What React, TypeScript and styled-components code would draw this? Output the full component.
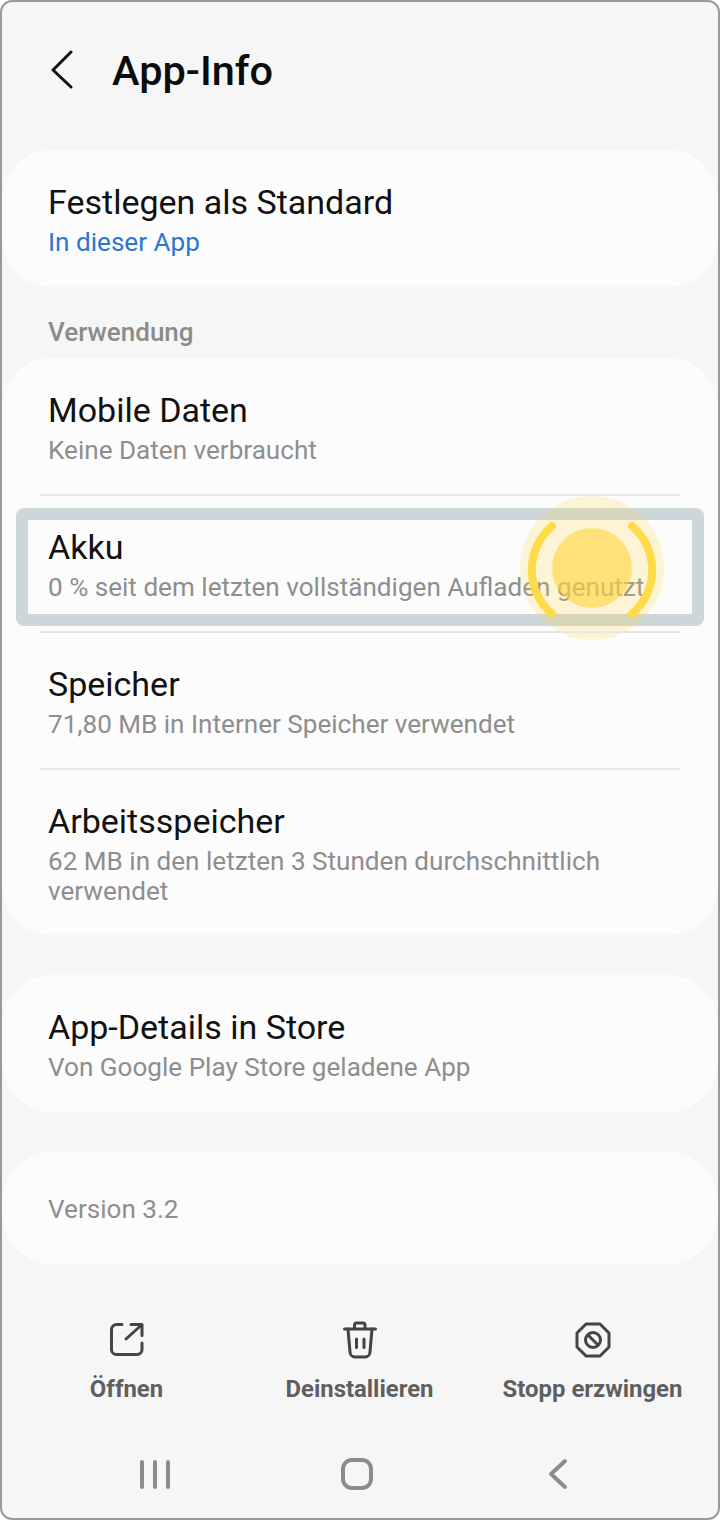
import styled, { createGlobalStyle } from 'styled-components';

const GlobalStyle = createGlobalStyle`
  html, body {
    margin: 0;
    padding: 0;
    background: #fff;
  }
  * {
    box-sizing: border-box;
  }
`;

const Phone = styled.div`
  width: 720px;
  height: 1520px;
  display: flex;
  flex-direction: column;
  overflow: hidden;
  background: #f6f6f6;
  border: 2px solid #9a9a9a;
  border-radius: 12px;
  font-family: Roboto, 'Liberation Sans', sans-serif;
`;

const Header = styled.header`
  height: 148px;
  display: flex;
  align-items: center;
  padding: 0 0 12px 48px;
  gap: 38px;
`;

const HeaderTitle = styled.h1`
  margin: 0;
  font-size: 41.5px;
  font-weight: 500;
  color: #0c0c0c;
`;

const Card = styled.section<{ $gap?: number }>`
  background: #fcfcfc;
  border-radius: 50px;
  margin-bottom: ${(p) => p.$gap ?? 40}px;
`;

const SectionLabel = styled.div`
  height: 71px;
  padding: 30px 0 0 46px;
  font-size: 26px;
  line-height: 30px;
  font-weight: 500;
  color: #8b8b8b;
`;

const Row = styled.div<{ $wrapped?: boolean }>`
  position: relative;
  padding: 32px 40px ${(p) => (p.$wrapped ? 29 : 30)}px 46px;
`;

const Divider = styled.div`
  position: relative;
  height: 2px;
  margin: -1px 38px;
  background: #e4e6e8;
`;

const RowTitle = styled.div`
  font-size: 34px;
  line-height: 40px;
  color: #111;
`;

const RowSub = styled.div<{ $accent?: boolean }>`
  margin-top: 5px;
  font-size: 26.1px;
  line-height: 30px;
  color: ${(p) => (p.$accent ? '#2a76d2' : '#8e8e8e')};
`;

const VersionText = styled.div`
  padding: 42px 46px 40px;
  font-size: 26.1px;
  line-height: 30px;
  color: #8e8e8e;
`;

const Highlight = styled.div`
  position: absolute;
  left: 14px;
  right: 14px;
  top: 13px;
  height: 118px;
  border: 12px solid #cdd6db;
  border-radius: 8px;
`;

const TouchPoint = styled.svg`
  position: absolute;
  left: 518px;
  top: 1px;
  width: 144px;
  height: 144px;
  overflow: visible;
`;

const Actions = styled.div`
  display: grid;
  grid-template-columns: repeat(3, 233px);
  padding: 16px 0 0 8px;
`;

const ActionButton = styled.div`
  display: flex;
  flex-direction: column;
  align-items: center;
  gap: 14px;
  font-size: 23.9px;
  line-height: 30px;
  font-weight: 700;
  color: #5f5f5f;
  white-space: nowrap;
`;

const ActionIcon = styled.svg`
  width: 40px;
  height: 40px;
  margin-left: 1px;
  fill: none;
  stroke: #444;
  stroke-width: 3;
  stroke-linecap: round;
  stroke-linejoin: round;
`;

const NavBar = styled.nav`
  display: flex;
  justify-content: center;
  gap: 161px;
  padding: 50px 0 0 0;
  margin-left: -8px;
`;

const NavIcon = styled.svg`
  width: 40px;
  height: 40px;
  fill: none;
  stroke: #8c8c8c;
  stroke-width: 4;
  stroke-linecap: round;
  stroke-linejoin: round;
`;

export default function App() {
  return (
    <>
      <GlobalStyle />
      <Phone>
        <Header>
          <svg width="24" height="40" viewBox="0 0 24 40" fill="none" stroke="#111" strokeWidth="3" strokeLinecap="round" strokeLinejoin="round">
            <path d="M21 2 L3 20 L21 37" />
          </svg>
          <HeaderTitle>App-Info</HeaderTitle>
        </Header>

        <Card $gap={0}>
          <Row>
            <RowTitle>Festlegen als Standard</RowTitle>
            <RowSub $accent>In dieser App</RowSub>
          </Row>
        </Card>

        <SectionLabel>Verwendung</SectionLabel>

        <Card>
          <Row>
            <RowTitle>Mobile Daten</RowTitle>
            <RowSub>Keine Daten verbraucht</RowSub>
          </Row>
          <Divider />
          <Row>
            <RowTitle>Akku</RowTitle>
            <RowSub>0 % seit dem letzten vollständigen Aufladen genutzt</RowSub>
            <Highlight />
            <TouchPoint viewBox="0 0 144 144">
              <circle cx="72" cy="72" r="72" fill="rgba(255,214,60,0.2)" />
              <circle cx="72" cy="72" r="40" fill="rgba(255,214,60,0.6)" />
              <path d="M32 30 A58 58 0 0 0 32 118" fill="none" stroke="#ffdb4a" strokeWidth="8" strokeLinecap="round" />
              <path d="M112 30 A58 58 0 0 1 112 118" fill="none" stroke="#ffdb4a" strokeWidth="8" strokeLinecap="round" />
            </TouchPoint>
          </Row>
          <Divider />
          <Row>
            <RowTitle>Speicher</RowTitle>
            <RowSub>71,80 MB in Interner Speicher verwendet</RowSub>
          </Row>
          <Divider />
          <Row $wrapped>
            <RowTitle>Arbeitsspeicher</RowTitle>
            <RowSub>62 MB in den letzten 3 Stunden durchschnittlich verwendet</RowSub>
          </Row>
        </Card>

        <Card>
          <Row>
            <RowTitle>App-Details in Store</RowTitle>
            <RowSub>Von Google Play Store geladene App</RowSub>
          </Row>
        </Card>

        <Card $gap={40}>
          <VersionText>Version 3.2</VersionText>
        </Card>

        <Actions>
          <ActionButton>
            <ActionIcon viewBox="0 0 40 40">
              <path d="M15 4.5 H9.5 A5 5 0 0 0 4.5 9.5 V29.5 A5 5 0 0 0 9.5 34.5 H30 A5 5 0 0 0 35 29.5 V23" />
              <path d="M19 19 L34.5 5 M24 4.5 H35 V15.5" />
            </ActionIcon>
            Öffnen
          </ActionButton>
          <ActionButton>
            <ActionIcon viewBox="0 0 40 40">
              <path d="M4.5 9 H35.5 M14.5 9 V5 A2 2 0 0 1 16.5 3 H23 A2 2 0 0 1 25 5 V9" />
              <path d="M8 9 L10 32 A5 5 0 0 0 15 37 H25 A5 5 0 0 0 30 32 L32 9" />
              <path d="M16.5 19 V27.5 M24 19 V27.5" />
            </ActionIcon>
            Deinstallieren
          </ActionButton>
          <ActionButton>
            <ActionIcon viewBox="0 0 40 40">
              <path d="M13 4 H27 L36 13 V27 L27 36 H13 L4 27 V13 Z" />
              <circle cx="20" cy="20" r="7.5" />
              <path d="M15 15 L25 25" />
            </ActionIcon>
            Stopp erzwingen
          </ActionButton>
        </Actions>

        <NavBar>
          <NavIcon viewBox="0 0 40 40">
            <path d="M7 8 V33 M20 8 V33 M33 8 V33" />
          </NavIcon>
          <NavIcon viewBox="0 0 40 40">
            <rect x="7" y="6" width="28" height="28" rx="9" />
          </NavIcon>
          <NavIcon viewBox="0 0 40 40">
            <path d="M28 7 L14 20 L28 33" />
          </NavIcon>
        </NavBar>
      </Phone>
    </>
  );
}
